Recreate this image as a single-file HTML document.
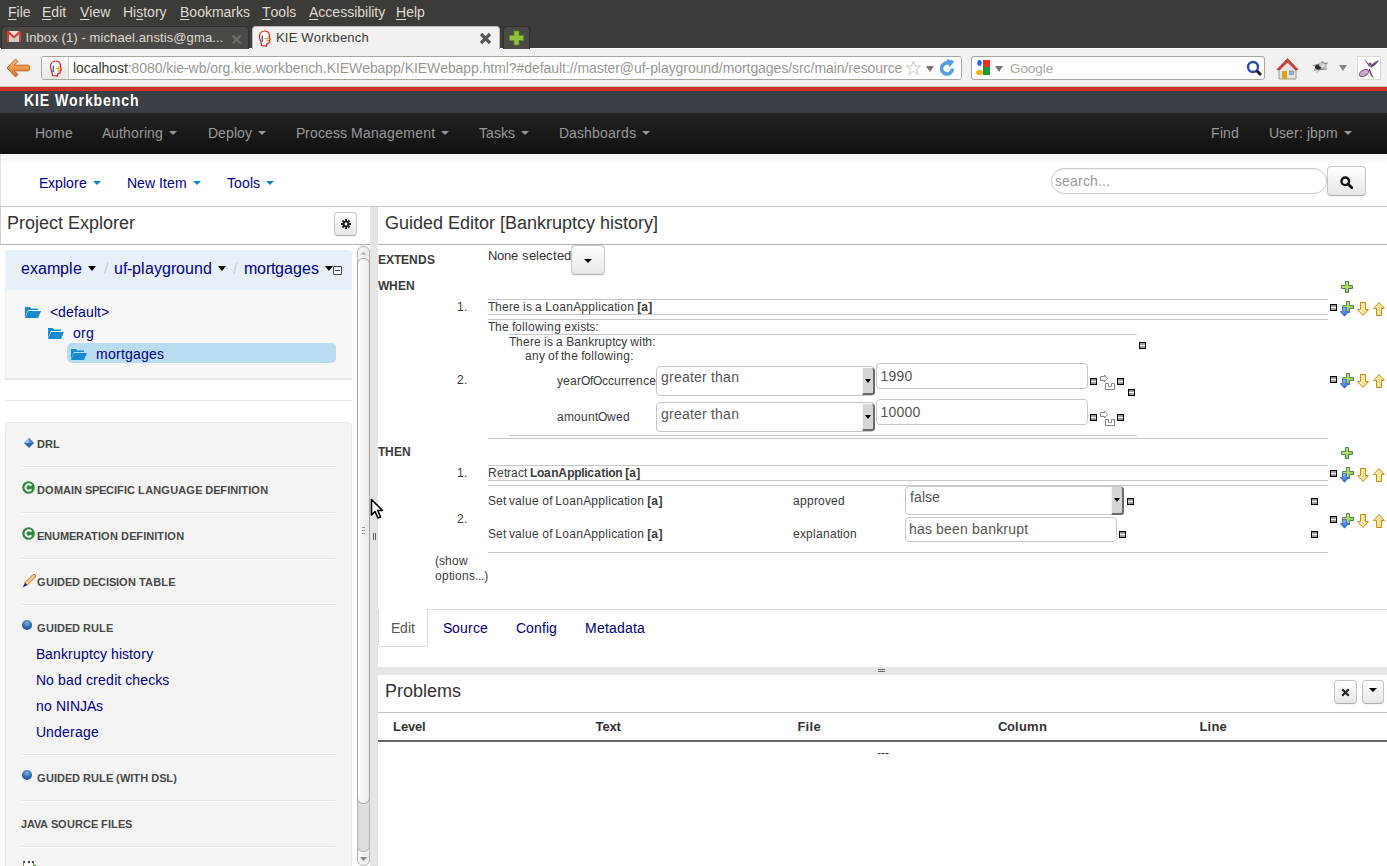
<!DOCTYPE html>
<html><head><meta charset="utf-8">
<style>
*{box-sizing:border-box;margin:0;padding:0}
html,body{width:1387px;height:866px;overflow:hidden;background:#fff;font-family:"Liberation Sans",sans-serif;position:relative;font-kerning:none}
.a{position:absolute;white-space:nowrap}
/* browser chrome */
#menubar{position:absolute;left:0;top:0;width:1387px;height:26px;background:#3c3b37}
#menubar>span{position:absolute;top:4px;font-size:14px;color:#dfdbd2;text-underline-offset:2px}
.tab{position:absolute;top:0px;height:23px;border:1px solid;border-bottom:none;border-radius:4px 4px 0 0}
#tabbar{position:absolute;left:0;top:26px;width:1387px;height:22px;background:#3c3b37}
#navbar0{position:absolute;left:0;top:49px;width:1387px;height:38px;background:#f2f1f0}
#red{position:absolute;left:0;top:87px;width:1387px;height:4px;background:#d0312d}
/* app */
#hdr{position:absolute;left:0;top:91px;width:1387px;height:22px;background:#3b3f46}
#nav{position:absolute;left:0;top:113px;width:1387px;height:41px;background:linear-gradient(#222,#111)}
#nav>span{position:absolute;top:12px;font-size:14px;color:#999}
.caret{display:inline-block;width:0;height:0;border-left:4px solid transparent;border-right:4px solid transparent;border-top:4px solid #999;vertical-align:middle;margin-left:6px;margin-top:-2px}
#tool{position:absolute;left:0;top:154px;width:1387px;height:53px;background:linear-gradient(#fff 0,#fff 1px,#f2f2f2 1px,#fff 11px);border-bottom:1px solid #c4c4c4;box-shadow:inset 1px 0 #e0e0e0}
#tool>span.l{position:absolute;top:21px;font-size:14px;color:#00008a}

.t{position:absolute;white-space:nowrap;line-height:1}
.lnk{color:#00008a}
.ahdr{position:absolute;font-size:11px;font-weight:bold;color:#484848;line-height:1;white-space:nowrap}
.sep{position:absolute;left:22px;width:313px;height:2px;border-top:1px solid #e2e2e2;background:#fff}
.re{position:absolute;font-size:12px;color:#3a3a3a;line-height:1;white-space:nowrap}
.hl{position:absolute;height:1px;background:#c8c8c8}
.mi{position:absolute;width:7px;height:7px;border:1px solid #000;background:linear-gradient(#999 0,#999 2px,#fff 2px,#fff 3px,#999 3px)}
.sel{position:absolute;border:1px solid #c6c6c6;border-radius:4px;background:#fff}
.selb{position:absolute;width:13px;background:#d6d6d6;border-left:1px solid #f2f2f2;border-right:2px solid #6a6a6a;border-bottom:2px solid #6a6a6a;border-radius:0 3px 3px 0}
.selb:after{content:"";position:absolute;left:2px;top:50%;margin-top:-2px;border-left:3px solid transparent;border-right:3px solid transparent;border-top:4px solid #000}
.inp{position:absolute;border:1px solid #c6c6c6;border-radius:4px;background:#fff}
.btn{position:absolute;border:1px solid #c4c4c4;border-bottom-color:#b0b0b0;border-radius:4px;background:linear-gradient(#fff,#e6e6e6);box-shadow:0 1px 2px rgba(0,0,0,.05)}
</style></head>
<body>
<svg width="0" height="0" style="position:absolute"><defs>
<linearGradient id="gpl" x1="0" y1="0" x2="1" y2="1"><stop offset="0" stop-color="#e8ec70"></stop><stop offset="1" stop-color="#8ac050"></stop></linearGradient>
<linearGradient id="gbl" x1="0" y1="0" x2="0" y2="1"><stop offset="0" stop-color="#8ab8f8"></stop><stop offset="1" stop-color="#2a60d0"></stop></linearGradient>
<linearGradient id="gyl" x1="0" y1="0" x2="1" y2="0"><stop offset="0" stop-color="#fff6d0"></stop><stop offset="1" stop-color="#f6d070"></stop></linearGradient>
</defs></svg>
<div id="menubar">
<span style="left:8px"><u>F</u>ile</span><span style="left:42px"><u>E</u>dit</span><span style="left:80px"><u>V</u>iew</span><span style="left:123px">Hi<u>s</u>tory</span><span style="left:180px"><u>B</u>ookmarks</span><span style="left:262px"><u>T</u>ools</span><span style="left:309px"><u>A</u>ccessibility</span><span style="left:396px"><u>H</u>elp</span>
</div>
<div id="tabbar">
 <div class="tab" style="left:1px;width:248px;background:#4a4945;border-color:#2e2d2a">
  <svg class="a" style="left:5px;top:4px" width="14" height="11" viewBox="0 0 14 11"><rect x="0" y="0" width="14" height="11" fill="#e8e6de"></rect><path d="M2 2L7 7L12 2V11H2Z" fill="#cfcdc4"></path><path d="M0 0H2L7 5L12 0H14V11H12V3L7 7.5L2 3V11H0Z" fill="#d83b30"></path></svg>
  <span class="a" style="left:23.5px;top:3px;font-size:13px;color:#dfdbd2;letter-spacing:0.1px">Inbox (1) - michael.anstis@gma...</span>
  <svg class="a" style="left:229px;top:7px" width="11" height="11" viewBox="0 0 11 11"><path d="M1.5 1.5L9.5 9.5M9.5 1.5L1.5 9.5" stroke="#6e6c67" stroke-width="2.4"></path></svg>
 </div>
 <div class="tab" style="left:252px;width:248px;background:#f2f1f0;border-color:#bdbab4;height:24px">
  <svg class="a" style="left:5px;top:3px" width="14" height="17" viewBox="0 0 14 17"><path d="M7 1C3.5 1 1.5 3.5 1.5 6.5C1.5 9 2.5 10.5 3 12L3.5 15.5L8.5 16L9 13.5L11 13L11.3 10.5L12.3 9.8L11.5 7.5C12 3.5 10 1 7 1Z" fill="#fff" stroke="#e8101a" stroke-width="1.2"></path><path d="M4.3 5.5V12" stroke="#1060d0" stroke-width="1.3"></path><path d="M6.5 8.5H9.5M8 11H9.8L10 6.5" stroke="#f0b000" stroke-width="1.2" fill="none"></path></svg>
  <span class="a" style="left:23px;top:3px;font-size:13px;color:#3c3b37;letter-spacing:0.2px">KIE Workbench</span>
  <svg class="a" style="left:226px;top:5px" width="13" height="13" viewBox="0 0 13 13"><path d="M2 2L11 11M11 2L2 11" stroke="#575552" stroke-width="3.2"></path></svg>
 </div>
 <div class="tab" style="left:503px;width:27px;background:#4a4945;border-color:#2e2d2a">
  <svg class="a" style="left:4px;top:3px" width="17" height="16" viewBox="0 0 17 16"><path d="M6 1H11V5.5H15.5V10.5H11V15H6V10.5H1.5V5.5H6Z" fill="#8fc33a" stroke="#5d8d1c" stroke-width="0.8"></path></svg>
 </div>
</div>
<div id="navbar0">
 <svg class="a" style="left:6px;top:9px" width="25" height="20" viewBox="0 0 25 20"><defs><linearGradient id="gar" x1="0" y1="0" x2="0" y2="1"><stop offset="0" stop-color="#f8c080"></stop><stop offset="1" stop-color="#e07020"></stop></linearGradient></defs><path d="M9.5 1L1 10L9.5 19L12 16.5L8 12.8H22.5C24 12.8 24 7.2 22.5 7.2H8L12 3.5Z" fill="url(#gar)" stroke="#c0601a" stroke-width="1" stroke-linejoin="round"></path></svg>
 <div class="a" style="left:41px;top:7px;width:921px;height:24px;border:1px solid #a9a59f;border-radius:3px;background:#fff;overflow:hidden">
  <div class="a" style="left:0;top:0;width:27px;height:22px;background:linear-gradient(#f9f9f8,#e9e8e6);border-right:1px solid #d6d3ce"></div>
  <svg class="a" style="left:7px;top:3px" width="14" height="17" viewBox="0 0 14 17"><path d="M7 1C3.5 1 1.5 3.5 1.5 6.5C1.5 9 2.5 10.5 3 12L3.5 15.5L8.5 16L9 13.5L11 13L11.3 10.5L12.3 9.8L11.5 7.5C12 3.5 10 1 7 1Z" fill="#fff" stroke="#e8101a" stroke-width="1.2"></path><path d="M4.3 5.5V12" stroke="#1060d0" stroke-width="1.3"></path><path d="M6.5 8.5H9.5M8 11H9.8L10 6.5" stroke="#f0b000" stroke-width="1.2" fill="none"></path></svg>
  <span class="a" style="left:31px;top:3px;font-size:14px;color:#999893;letter-spacing:-0.06px"><span style="color:#3c3b37">localhost</span>:8080/kie-wb/org.kie.workbench.KIEWebapp/KIEWebapp.html?#default://master@uf-playground/mortgages/src/main/resources</span>
  <div class="a" style="left:860px;top:0;width:60px;height:22px;background:#fff"></div>
  <svg class="a" style="left:863px;top:3px" width="17" height="16" viewBox="0 0 17 16"><path d="M8.5 1L10.6 6H15.8L11.6 9.2L13.2 14.5L8.5 11.4L3.8 14.5L5.4 9.2L1.2 6H6.4Z" fill="#fff" stroke="#c9c7c2" stroke-width="1"></path></svg>
  <svg class="a" style="left:884px;top:9px" width="8" height="6" viewBox="0 0 8 6"><path d="M0 0H8L4 6Z" fill="#77756f"></path></svg>
  <svg class="a" style="left:897px;top:2px" width="17" height="18" viewBox="0 0 17 18"><path d="M13.5 9.5A5.5 5.5 0 1 1 10 4.3" stroke="#5a9ee0" stroke-width="3.6" fill="none"></path><path d="M7.5 0L15.5 2L10.5 8.5Z" fill="#5a9ee0"></path></svg>
 </div>
 <div class="a" style="left:971px;top:7px;width:294px;height:24px;border:1px solid #a9a59f;border-radius:3px;background:#fff">
  <svg class="a" style="left:3px;top:3px" width="16" height="16" viewBox="0 0 16 16"><rect x="8" y="0" width="7" height="7" fill="#e32"></rect><rect x="8" y="7" width="7" height="8" fill="#1a9a3a"></rect><ellipse cx="4.5" cy="3" rx="2.2" ry="3" fill="#2a6ad8"></ellipse><ellipse cx="4.5" cy="12.5" rx="3.5" ry="2.5" fill="#f4b400"></ellipse></svg>
  <svg class="a" style="left:23px;top:9px" width="8" height="6" viewBox="0 0 8 6"><path d="M0 0H8L4 6Z" fill="#77756f"></path></svg>
  <span class="a" style="left:38px;top:3.5px;font-size:13.4px;color:#aaa49c">Google</span>
  <svg class="a" style="left:274px;top:3px" width="17" height="17" viewBox="0 0 17 17"><circle cx="7" cy="7" r="5" fill="#fff" stroke="#2c4fae" stroke-width="2.4"></circle><path d="M10.5 10.5L15 15" stroke="#222" stroke-width="3"></path></svg>
 </div>
 <svg class="a" style="left:1276px;top:8px" width="23" height="23" viewBox="0 0 23 23"><path d="M3 12L11.5 3L20 12V22H3Z" fill="#e6e4e0" stroke="#8a8884" stroke-width="0.8"></path><path d="M1 12.5L11.5 1.5L22 12.5L19.5 13L11.5 5L3.5 13Z" fill="#d23f3a" stroke="#a82a25" stroke-width="0.7"></path><rect x="6" y="14" width="5" height="8" fill="#e0a020"></rect><rect x="13.5" y="14" width="4" height="3.5" fill="#8fb8d8" stroke="#666" stroke-width="0.5"></rect></svg>
 <svg class="a" style="left:1312px;top:10px" width="17" height="15" viewBox="0 0 17 15"><ellipse cx="9.5" cy="7" rx="5.5" ry="4" fill="#b8b8b8" transform="rotate(-15 9.5 7)"></ellipse><ellipse cx="6" cy="8" rx="3" ry="2.6" fill="#2a2a2a"></ellipse><path d="M1 6.5L16 4M2 11L15 10M5 13.5L8 10M11 2L9 6" stroke="#666" stroke-width="0.8"></path><ellipse cx="10" cy="6" rx="3" ry="2" fill="#e8e8e8" opacity="0.7"></ellipse></svg>
 <svg class="a" style="left:1339px;top:16px" width="8" height="6" viewBox="0 0 8 6"><path d="M0 0H8L4 6Z" fill="#8a8884"></path></svg>
 <div class="a" style="left:1357px;top:7px;width:24px;height:24px;border:1px solid #dcd8d4;background:#fff"></div>
 <svg class="a" style="left:1358px;top:8px" width="22" height="22" viewBox="0 0 22 22"><ellipse cx="6" cy="16" rx="5" ry="3" fill="#c9a5c9" stroke="#6e4a77" stroke-width="1" transform="rotate(-30 6 16)"></ellipse><path d="M11 10C9 6 7 3 5 2C8 3 10 6 12 9Z" fill="#6e4a77"></path><path d="M12 9C15 6 18 4 21 3C19 7 16 9 13 11Z" fill="#6e4a77"></path><path d="M12 12C13 15 14 18 16 21C13 20 11 16 11 12Z" fill="#6e4a77"></path><circle cx="12" cy="7" r="1.5" fill="#6e4a77"></circle></svg>
 <div class="a" style="left:0;top:37px;width:1387px;height:1px;background:#c9c5bf"></div>
</div>
<div id="red"></div>
<div id="hdr"><span class="a nh" style="left:24px;top:1.7px;line-height:1;font-size:16px;font-weight:bold;color:#fff;letter-spacing:1px;transform:scaleX(0.88);transform-origin:0 0">KIE Workbench</span></div>
<div id="nav">
<span style="left:35px"><span style="letter-spacing: -0.109px;">H</span><span style="letter-spacing: 0.219px;">o</span><span style="letter-spacing: 0.344px;">m</span><span style="letter-spacing: 0.219px;">e</span></span>
<span style="left:102px"><span style="letter-spacing: -0.344px;">A</span><span style="letter-spacing: 0.219px;">u</span><span style="letter-spacing: 0.109px;">t</span><span style="letter-spacing: 0.219px;">h</span><span style="letter-spacing: 0.219px;">o</span><span style="letter-spacing: 0.344px;">r</span><span style="letter-spacing: -0.109px;">i</span><span style="letter-spacing: 0.219px;">n</span><span style="letter-spacing: 0.219px;">g</span><i class="caret"></i></span>
<span style="left:208px"><span style="letter-spacing: -0.109px;">D</span><span style="letter-spacing: 0.219px;">e</span><span style="letter-spacing: 0.219px;">p</span><span style="letter-spacing: -0.109px;">l</span><span style="letter-spacing: 0.219px;">o</span>y<i class="caret"></i></span>
<span style="left:296px"><span style="letter-spacing: -0.344px;">P</span><span style="letter-spacing: 0.344px;">r</span><span style="letter-spacing: 0.219px;">o</span>c<span style="letter-spacing: 0.219px;">e</span>ss<span style="letter-spacing: 0.109px;"> </span><span style="letter-spacing: 0.344px;">M</span><span style="letter-spacing: 0.219px;">a</span><span style="letter-spacing: 0.219px;">n</span><span style="letter-spacing: 0.219px;">a</span><span style="letter-spacing: 0.219px;">g</span><span style="letter-spacing: 0.219px;">e</span><span style="letter-spacing: 0.344px;">m</span><span style="letter-spacing: 0.219px;">e</span><span style="letter-spacing: 0.219px;">n</span><span style="letter-spacing: 0.109px;">t</span><i class="caret"></i></span>
<span style="left:479px"><span style="letter-spacing: -1.547px;">T</span><span style="letter-spacing: 0.219px;">a</span>sks<i class="caret"></i></span>
<span style="left:559px"><span style="letter-spacing: -0.109px;">D</span><span style="letter-spacing: 0.219px;">a</span>s<span style="letter-spacing: 0.219px;">h</span><span style="letter-spacing: 0.219px;">b</span><span style="letter-spacing: 0.219px;">o</span><span style="letter-spacing: 0.219px;">a</span><span style="letter-spacing: 0.344px;">r</span><span style="letter-spacing: 0.219px;">d</span>s<i class="caret"></i></span>
<span style="left:1211px"><span style="letter-spacing: 0.453px;">F</span><span style="letter-spacing: -0.109px;">i</span><span style="letter-spacing: 0.219px;">n</span><span style="letter-spacing: 0.219px;">d</span></span>
<span style="left:1269px"><span style="letter-spacing: -0.109px;">U</span>s<span style="letter-spacing: 0.219px;">e</span><span style="letter-spacing: 0.344px;">r</span><span style="letter-spacing: 0.109px;">:</span><span style="letter-spacing: 0.109px;"> </span><span style="letter-spacing: -0.109px;">j</span><span style="letter-spacing: 0.219px;">b</span><span style="letter-spacing: 0.219px;">p</span><span style="letter-spacing: 0.344px;">m</span><i class="caret"></i></span>
</div>
<div id="tool">
<span class="l" style="left:39px"><span style="letter-spacing: -0.344px;">E</span>x<span style="letter-spacing: 0.219px;">p</span><span style="letter-spacing: -0.109px;">l</span><span style="letter-spacing: 0.219px;">o</span><span style="letter-spacing: 0.344px;">r</span><span style="letter-spacing: 0.219px;">e</span><i class="caret" style="border-top-color:#08c"></i></span>
<span class="l" style="left:127px"><span style="letter-spacing: -0.109px;">N</span><span style="letter-spacing: 0.219px;">e</span><span style="letter-spacing: -0.109px;">w</span><span style="letter-spacing: 0.109px;"> </span><span style="letter-spacing: 0.109px;">I</span><span style="letter-spacing: 0.109px;">t</span><span style="letter-spacing: 0.219px;">e</span><span style="letter-spacing: 0.344px;">m</span><i class="caret" style="border-top-color:#08c"></i></span>
<div class="a" style="left:1051px;top:14px;width:276px;height:26px;border:1px solid #ccc;border-radius:13px;background:#fff;box-shadow:inset 0 1px 1px rgba(0,0,0,.075)"></div>
<span class="t" style="left:1055px;top:19.5px;font-size:14px;color:#999">s<span style="letter-spacing: 0.219px;">e</span><span style="letter-spacing: 0.219px;">a</span><span style="letter-spacing: 0.344px;">r</span>c<span style="letter-spacing: 0.219px;">h</span><span style="letter-spacing: 0.109px;">.</span><span style="letter-spacing: 0.109px;">.</span><span style="letter-spacing: 0.109px;">.</span></span>
<div class="btn" style="left:1327px;top:12px;width:39px;height:30px"></div>
<svg class="a" style="left:1340px;top:22px" width="13" height="13" viewBox="0 0 13 13"><circle cx="5.3" cy="5.3" r="3.8" fill="none" stroke="#111" stroke-width="2.4"></circle><path d="M8 8L11.8 11.8" stroke="#111" stroke-width="2.8" stroke-linecap="round"></path></svg>
<span class="l" style="left:227px"><span style="letter-spacing: -1.547px;">T</span><span style="letter-spacing: 0.219px;">o</span><span style="letter-spacing: 0.219px;">o</span><span style="letter-spacing: -0.109px;">l</span>s<i class="caret" style="border-top-color:#08c"></i></span>
</div>

<!-- LEFT PANEL -->
<div class="a" style="left:0;top:207px;width:370px;height:38px;border-left:1px solid #d0d0d0;border-bottom:1px solid #b4b4b4;background:#fff;box-shadow:0 1px 0 #f6f6f6"></div>
<span class="t" style="left:7px;top:213.5px;font-size:18px;color:#333">Pr<span style="letter-spacing: -0.016px;">o</span>j<span style="letter-spacing: -0.016px;">e</span>ct Ex<span style="letter-spacing: -0.016px;">p</span>l<span style="letter-spacing: -0.016px;">o</span>r<span style="letter-spacing: -0.016px;">e</span>r</span>
<div class="btn" style="left:334px;top:212px;width:23px;height:24px"></div>
<svg class="a" style="left:341px;top:219px" width="10" height="10" viewBox="0 0 10 10"><g fill="#222"><circle cx="5" cy="5" r="3.3"></circle><rect x="4" y="0" width="2" height="10"></rect><rect x="0" y="4" width="10" height="2"></rect><rect x="4" y="0" width="2" height="10" transform="rotate(45 5 5)"></rect><rect x="4" y="0" width="2" height="10" transform="rotate(-45 5 5)"></rect></g><circle cx="5" cy="5" r="1.4" fill="#fff"></circle></svg>
<div class="a" style="left:0;top:245px;width:355px;height:621px;background:#fff"></div>
<div class="a" style="left:5px;top:250px;width:347px;height:40px;background:#e6f0f6;border-radius:4px 4px 0 0"></div>
<span class="t lnk" style="left:21px;top:261px;font-size:16px"><span style="letter-spacing: 0.094px;">e</span>x<span style="letter-spacing: 0.094px;">a</span><span style="letter-spacing: -0.328px;">m</span><span style="letter-spacing: 0.094px;">p</span><span style="letter-spacing: 0.438px;">l</span><span style="letter-spacing: 0.094px;">e</span><i class="caret" style="border-top-color:#000;margin-left:6px;border-width:5px 4.5px 0"></i></span>
<span class="t" style="left:104px;top:261px;font-size:16px;color:#ccc"><span style="letter-spacing: -0.453px;">/</span></span>
<span class="t lnk" style="left:114px;top:261px;font-size:16px"><span style="letter-spacing: 0.094px;">u</span><span style="letter-spacing: -0.453px;">f</span><span style="letter-spacing: -0.328px;">-</span><span style="letter-spacing: 0.094px;">p</span><span style="letter-spacing: 0.438px;">l</span><span style="letter-spacing: 0.094px;">a</span>y<span style="letter-spacing: 0.094px;">g</span><span style="letter-spacing: -0.328px;">r</span><span style="letter-spacing: 0.094px;">o</span><span style="letter-spacing: 0.094px;">u</span><span style="letter-spacing: 0.094px;">n</span><span style="letter-spacing: 0.094px;">d</span><i class="caret" style="border-top-color:#000;margin-left:6px;border-width:5px 4.5px 0"></i></span>
<span class="t" style="left:233px;top:261px;font-size:16px;color:#ccc"><span style="letter-spacing: -0.453px;">/</span></span>
<span class="t lnk" style="left:244px;top:261px;font-size:16px"><span style="letter-spacing: -0.328px;">m</span><span style="letter-spacing: 0.094px;">o</span><span style="letter-spacing: -0.328px;">r</span><span style="letter-spacing: -0.453px;">t</span><span style="letter-spacing: 0.094px;">g</span><span style="letter-spacing: 0.094px;">a</span><span style="letter-spacing: 0.094px;">g</span><span style="letter-spacing: 0.094px;">e</span>s<i class="caret" style="border-top-color:#000;margin-left:6px;border-width:5px 4.5px 0"></i></span>
<div class="a" style="left:333px;top:266px;width:9px;height:9px;border:1px solid #444;border-radius:1px;background:#f4f4f4"><div class="a" style="left:1px;top:3px;width:5px;height:1px;background:#444"></div></div>
<div class="a" style="left:5px;top:290px;width:347px;height:90px;background:#f7f7f7;border-left:1px solid #ececec;border-bottom:2px solid #e8e8e8"></div>
<div class="a" style="left:67px;top:343px;width:269px;height:20px;background:#b8dcf0;border-radius:5px"></div>
<svg class="a" style="left:25px;top:307px" width="16" height="11" viewBox="0 0 16 11"><path d="M0 0H5L6 1.5H13V3H3L0 10Z" fill="#1a8ad0"></path><path d="M3 4H16L13 11H0Z" fill="#1a8ad0"></path></svg>
<span class="t lnk" style="left:50px;top:304.6px;font-size:14px"><span style="letter-spacing: -0.172px;">&lt;</span><span style="letter-spacing: 0.219px;">d</span><span style="letter-spacing: 0.219px;">e</span><span style="letter-spacing: 0.109px;">f</span><span style="letter-spacing: 0.219px;">a</span><span style="letter-spacing: 0.219px;">u</span><span style="letter-spacing: -0.109px;">l</span><span style="letter-spacing: 0.109px;">t</span><span style="letter-spacing: -0.172px;">&gt;</span></span>
<svg class="a" style="left:48px;top:328px" width="16" height="11" viewBox="0 0 16 11"><path d="M0 0H5L6 1.5H13V3H3L0 10Z" fill="#1a8ad0"></path><path d="M3 4H16L13 11H0Z" fill="#1a8ad0"></path></svg>
<span class="t lnk" style="left:73px;top:325.8px;font-size:14px"><span style="letter-spacing: 0.219px;">o</span><span style="letter-spacing: 0.344px;">r</span><span style="letter-spacing: 0.219px;">g</span></span>
<svg class="a" style="left:71px;top:349px" width="16" height="11" viewBox="0 0 16 11"><path d="M0 0H5L6 1.5H13V3H3L0 10Z" fill="#1a8ad0"></path><path d="M3 4H16L13 11H0Z" fill="#1a8ad0"></path></svg>
<span class="t lnk" style="left:96px;top:346.8px;font-size:14px"><span style="letter-spacing: 0.344px;">m</span><span style="letter-spacing: 0.219px;">o</span><span style="letter-spacing: 0.344px;">r</span><span style="letter-spacing: 0.109px;">t</span><span style="letter-spacing: 0.219px;">g</span><span style="letter-spacing: 0.219px;">a</span><span style="letter-spacing: 0.219px;">g</span><span style="letter-spacing: 0.219px;">e</span>s</span>
<div class="a" style="left:5px;top:400px;width:347px;height:1px;background:#e8e8e8"></div>
<div class="a" style="left:5px;top:422px;width:347px;height:450px;background:#f4f4f4;border:1px solid #e8e8e8;border-radius:4px"></div>
<svg class="a" style="left:24px;top:438px" width="10" height="10" viewBox="0 0 10 10"><path d="M5 0L10 5L5 10L0 5Z" fill="#2a68b0"></path><path d="M5 0L5 5H0Z" fill="#9cc0e8"></path><path d="M5 0L10 5H5Z" fill="#4a88c8"></path></svg>
<span class="ahdr" style="left:37px;top:438.7px"><span style="letter-spacing: 0.063px;">D</span><span style="letter-spacing: 0.063px;">R</span><span style="letter-spacing: 0.281px;">L</span></span>
<div class="sep" style="top:466px"></div>
<svg class="a" style="left:22px;top:481px" width="13" height="13" viewBox="0 0 13 13"><circle cx="6.5" cy="6.5" r="6.3" fill="#2e8b3e"></circle><path d="M9.3 4.6A3.2 3.2 0 1 0 9.3 8.4" stroke="#fff" stroke-width="2" fill="none"></path></svg>
<span class="ahdr" style="left:37px;top:485.3px"><span style="letter-spacing: 0.063px;">D</span><span style="letter-spacing: 0.438px;">O</span><span style="letter-spacing: -0.156px;">M</span><span style="letter-spacing: 0.063px;">A</span><span style="letter-spacing: -0.063px;">I</span><span style="letter-spacing: 0.063px;">N</span><span style="letter-spacing: -0.063px;"> </span><span style="letter-spacing: -0.344px;">S</span><span style="letter-spacing: -0.344px;">P</span><span style="letter-spacing: -0.344px;">E</span><span style="letter-spacing: 0.063px;">C</span><span style="letter-spacing: -0.063px;">I</span><span style="letter-spacing: 0.281px;">F</span><span style="letter-spacing: -0.063px;">I</span><span style="letter-spacing: 0.063px;">C</span><span style="letter-spacing: -0.063px;"> </span><span style="letter-spacing: 0.281px;">L</span><span style="letter-spacing: 0.063px;">A</span><span style="letter-spacing: 0.063px;">N</span><span style="letter-spacing: 0.438px;">G</span><span style="letter-spacing: 0.063px;">U</span><span style="letter-spacing: 0.063px;">A</span><span style="letter-spacing: 0.438px;">G</span><span style="letter-spacing: -0.344px;">E</span><span style="letter-spacing: -0.063px;"> </span><span style="letter-spacing: 0.063px;">D</span><span style="letter-spacing: -0.344px;">E</span><span style="letter-spacing: 0.281px;">F</span><span style="letter-spacing: -0.063px;">I</span><span style="letter-spacing: 0.063px;">N</span><span style="letter-spacing: -0.063px;">I</span><span style="letter-spacing: 0.281px;">T</span><span style="letter-spacing: -0.063px;">I</span><span style="letter-spacing: 0.438px;">O</span><span style="letter-spacing: 0.063px;">N</span></span>
<div class="sep" style="top:512px"></div>
<svg class="a" style="left:22px;top:527px" width="13" height="13" viewBox="0 0 13 13"><circle cx="6.5" cy="6.5" r="6.3" fill="#2e8b3e"></circle><path d="M9.3 4.6A3.2 3.2 0 1 0 9.3 8.4" stroke="#fff" stroke-width="2" fill="none"></path></svg>
<span class="ahdr" style="left:37px;top:531.3px"><span style="letter-spacing: -0.344px;">E</span><span style="letter-spacing: 0.063px;">N</span><span style="letter-spacing: 0.063px;">U</span><span style="letter-spacing: -0.156px;">M</span><span style="letter-spacing: -0.344px;">E</span><span style="letter-spacing: 0.063px;">R</span><span style="letter-spacing: -0.938px;">A</span><span style="letter-spacing: 0.281px;">T</span><span style="letter-spacing: -0.063px;">I</span><span style="letter-spacing: 0.438px;">O</span><span style="letter-spacing: 0.063px;">N</span><span style="letter-spacing: -0.063px;"> </span><span style="letter-spacing: 0.063px;">D</span><span style="letter-spacing: -0.344px;">E</span><span style="letter-spacing: 0.281px;">F</span><span style="letter-spacing: -0.063px;">I</span><span style="letter-spacing: 0.063px;">N</span><span style="letter-spacing: -0.063px;">I</span><span style="letter-spacing: 0.281px;">T</span><span style="letter-spacing: -0.063px;">I</span><span style="letter-spacing: 0.438px;">O</span><span style="letter-spacing: 0.063px;">N</span></span>
<div class="sep" style="top:558px"></div>
<svg class="a" style="left:22px;top:573px" width="15" height="15" viewBox="0 0 15 15"><path d="M2.8 9.8L10.8 1.8Q12.2 0.8 13.3 1.9Q14.2 3 13.2 4.2L5.2 12.2Z" fill="#f9c98a" stroke="#b8661e" stroke-width="0.9"></path><path d="M2.8 9.8L5.2 12.2L0.8 14.2Z" fill="#1a2a70"></path></svg>
<span class="ahdr" style="left:37px;top:577.3px"><span style="letter-spacing: 0.438px;">G</span><span style="letter-spacing: 0.063px;">U</span><span style="letter-spacing: -0.063px;">I</span><span style="letter-spacing: 0.063px;">D</span><span style="letter-spacing: -0.344px;">E</span><span style="letter-spacing: 0.063px;">D</span><span style="letter-spacing: -0.063px;"> </span><span style="letter-spacing: 0.063px;">D</span><span style="letter-spacing: -0.344px;">E</span><span style="letter-spacing: 0.063px;">C</span><span style="letter-spacing: -0.063px;">I</span><span style="letter-spacing: -0.344px;">S</span><span style="letter-spacing: -0.063px;">I</span><span style="letter-spacing: 0.438px;">O</span><span style="letter-spacing: 0.063px;">N</span><span style="letter-spacing: -0.063px;"> </span><span style="letter-spacing: -0.719px;">T</span><span style="letter-spacing: 0.063px;">A</span><span style="letter-spacing: 0.063px;">B</span><span style="letter-spacing: 0.281px;">L</span><span style="letter-spacing: -0.344px;">E</span></span>
<div class="sep" style="top:604px"></div>
<svg class="a" style="left:22px;top:620px" width="10" height="10" viewBox="0 0 10 10"><defs><radialGradient id="gb620" cx="0.5" cy="0.3" r="0.7"><stop offset="0" stop-color="#8ab4e0"></stop><stop offset="0.5" stop-color="#3a78b8"></stop><stop offset="1" stop-color="#1a5090"></stop></radialGradient></defs><circle cx="5" cy="5" r="5" fill="url(#gb620)"></circle></svg>
<span class="ahdr" style="left:37px;top:623.3px"><span style="letter-spacing: 0.438px;">G</span><span style="letter-spacing: 0.063px;">U</span><span style="letter-spacing: -0.063px;">I</span><span style="letter-spacing: 0.063px;">D</span><span style="letter-spacing: -0.344px;">E</span><span style="letter-spacing: 0.063px;">D</span><span style="letter-spacing: -0.063px;"> </span><span style="letter-spacing: 0.063px;">R</span><span style="letter-spacing: 0.063px;">U</span><span style="letter-spacing: 0.281px;">L</span><span style="letter-spacing: -0.344px;">E</span></span>
<span class="t lnk" style="left:36px;top:647px;font-size:14px"><span style="letter-spacing: -0.344px;">B</span><span style="letter-spacing: 0.219px;">a</span><span style="letter-spacing: 0.219px;">n</span>k<span style="letter-spacing: 0.344px;">r</span><span style="letter-spacing: 0.219px;">u</span><span style="letter-spacing: 0.219px;">p</span><span style="letter-spacing: 0.109px;">t</span>cy<span style="letter-spacing: 0.109px;"> </span><span style="letter-spacing: 0.219px;">h</span><span style="letter-spacing: -0.109px;">i</span>s<span style="letter-spacing: 0.109px;">t</span><span style="letter-spacing: 0.219px;">o</span><span style="letter-spacing: 0.344px;">r</span>y</span>
<span class="t lnk" style="left:36px;top:673px;font-size:14px"><span style="letter-spacing: -0.109px;">N</span><span style="letter-spacing: 0.219px;">o</span><span style="letter-spacing: 0.109px;"> </span><span style="letter-spacing: 0.219px;">b</span><span style="letter-spacing: 0.219px;">a</span><span style="letter-spacing: 0.219px;">d</span><span style="letter-spacing: 0.109px;"> </span>c<span style="letter-spacing: 0.344px;">r</span><span style="letter-spacing: 0.219px;">e</span><span style="letter-spacing: 0.219px;">d</span><span style="letter-spacing: -0.109px;">i</span><span style="letter-spacing: 0.109px;">t</span><span style="letter-spacing: 0.109px;"> </span>c<span style="letter-spacing: 0.219px;">h</span><span style="letter-spacing: 0.219px;">e</span>cks</span>
<span class="t lnk" style="left:36px;top:699px;font-size:14px"><span style="letter-spacing: 0.219px;">n</span><span style="letter-spacing: 0.219px;">o</span><span style="letter-spacing: 0.109px;"> </span><span style="letter-spacing: -0.109px;">N</span><span style="letter-spacing: 0.109px;">I</span><span style="letter-spacing: -0.109px;">N</span>J<span style="letter-spacing: -0.344px;">A</span>s</span>
<span class="t lnk" style="left:36px;top:725px;font-size:14px"><span style="letter-spacing: -0.109px;">U</span><span style="letter-spacing: 0.219px;">n</span><span style="letter-spacing: 0.219px;">d</span><span style="letter-spacing: 0.219px;">e</span><span style="letter-spacing: 0.344px;">r</span><span style="letter-spacing: 0.219px;">a</span><span style="letter-spacing: 0.219px;">g</span><span style="letter-spacing: 0.219px;">e</span></span>
<div class="sep" style="top:754px"></div>
<svg class="a" style="left:22px;top:770px" width="10" height="10" viewBox="0 0 10 10"><defs><radialGradient id="gb770" cx="0.5" cy="0.3" r="0.7"><stop offset="0" stop-color="#8ab4e0"></stop><stop offset="0.5" stop-color="#3a78b8"></stop><stop offset="1" stop-color="#1a5090"></stop></radialGradient></defs><circle cx="5" cy="5" r="5" fill="url(#gb770)"></circle></svg>
<span class="ahdr" style="left:37px;top:772.7px"><span style="letter-spacing: 0.438px;">G</span><span style="letter-spacing: 0.063px;">U</span><span style="letter-spacing: -0.063px;">I</span><span style="letter-spacing: 0.063px;">D</span><span style="letter-spacing: -0.344px;">E</span><span style="letter-spacing: 0.063px;">D</span><span style="letter-spacing: -0.063px;"> </span><span style="letter-spacing: 0.063px;">R</span><span style="letter-spacing: 0.063px;">U</span><span style="letter-spacing: 0.281px;">L</span><span style="letter-spacing: -0.344px;">E</span><span style="letter-spacing: -0.063px;"> </span><span style="letter-spacing: 0.344px;">(</span><span style="letter-spacing: -0.375px;">W</span><span style="letter-spacing: -0.063px;">I</span><span style="letter-spacing: 0.281px;">T</span><span style="letter-spacing: 0.063px;">H</span><span style="letter-spacing: -0.063px;"> </span><span style="letter-spacing: 0.063px;">D</span><span style="letter-spacing: -0.344px;">S</span><span style="letter-spacing: 0.281px;">L</span><span style="letter-spacing: 0.344px;">)</span></span>
<div class="sep" style="top:800px"></div>
<span class="ahdr" style="left:21px;top:818.5px"><span style="letter-spacing: -0.125px;">J</span><span style="letter-spacing: -0.938px;">A</span><span style="letter-spacing: -1.344px;">V</span><span style="letter-spacing: 0.063px;">A</span><span style="letter-spacing: -0.063px;"> </span><span style="letter-spacing: -0.344px;">S</span><span style="letter-spacing: 0.438px;">O</span><span style="letter-spacing: 0.063px;">U</span><span style="letter-spacing: 0.063px;">R</span><span style="letter-spacing: 0.063px;">C</span><span style="letter-spacing: -0.344px;">E</span><span style="letter-spacing: -0.063px;"> </span><span style="letter-spacing: 0.281px;">F</span><span style="letter-spacing: -0.063px;">I</span><span style="letter-spacing: 0.281px;">L</span><span style="letter-spacing: -0.344px;">E</span><span style="letter-spacing: -0.344px;">S</span></span>
<div class="sep" style="top:846px"></div>
<div class="a" style="left:23px;top:861px;width:11px;height:6px;border-left:1px solid #b8862b;border-right:1px solid #b8862b;border-top:2px dotted #2a4a8a;background:#fff"></div><div class="a" style="left:34px;top:865px;width:2px;height:1px;background:#2a8a3a"></div>
<!-- scrollbar -->
<div class="a" style="left:357px;top:246px;width:13px;height:620px;border:1px solid #b8b4ae;border-radius:6px;background:linear-gradient(90deg,#f6f6f5,#ecebea)"></div>
<svg class="a" style="left:359px;top:250px" width="9" height="6" viewBox="0 0 9 6"><path d="M1.5 4.5H7.5L4.5 1.5Z" fill="#b4b4b4"></path></svg>
<div class="a" style="left:357px;top:780px;width:13px;height:72px;border:1px solid #b8b4ae;border-radius:0 0 6px 6px;background:#dedcda"></div>
<div class="a" style="left:357px;top:258px;width:13px;height:546px;border:1px solid #a8a4a0;border-radius:6px;background:linear-gradient(90deg,#fbfbfb,#e9e9e8)"></div>
<svg class="a" style="left:359px;top:856px" width="9" height="6" viewBox="0 0 9 6"><path d="M1 1H8L4.5 5Z" fill="#888"></path></svg>
<!-- splitter -->
<div class="a" style="left:370px;top:207px;width:8px;height:659px;background:#e5e5e5"></div>
<div class="a" style="left:373px;top:533px;width:1px;height:7px;background:#666"></div>
<div class="a" style="left:375px;top:533px;width:1px;height:7px;background:#666"></div>

<!-- RIGHT PANEL -->
<div class="a" style="left:378px;top:244px;width:1009px;height:1px;background:#b4b4b4"></div>
<span class="t" style="left:385px;top:213.7px;font-size:18px;color:#333">G<span style="letter-spacing: -0.016px;">u</span>i<span style="letter-spacing: -0.016px;">d</span><span style="letter-spacing: -0.016px;">e</span><span style="letter-spacing: -0.016px;">d</span> E<span style="letter-spacing: -0.016px;">d</span>it<span style="letter-spacing: -0.016px;">o</span>r [B<span style="letter-spacing: -0.016px;">a</span><span style="letter-spacing: -0.016px;">n</span>kr<span style="letter-spacing: -0.016px;">u</span><span style="letter-spacing: -0.016px;">p</span>tcy <span style="letter-spacing: -0.016px;">h</span>ist<span style="letter-spacing: -0.016px;">o</span>ry]</span>
<span class="re" style="left:378px;top:253.8px;font-weight:bold">EX<span style="letter-spacing: -0.328px;">T</span>E<span style="letter-spacing: 0.328px;">N</span><span style="letter-spacing: 0.328px;">D</span>S</span>
<span class="re" style="left:378px;top:279.8px;font-weight:bold"><span style="letter-spacing: -0.328px;">W</span><span style="letter-spacing: 0.328px;">H</span>E<span style="letter-spacing: 0.328px;">N</span></span>
<span class="t" style="left:488px;top:249px;font-size:13px;color:#333"><span style="letter-spacing: -0.391px;">N</span><span style="letter-spacing: -0.234px;">o</span><span style="letter-spacing: -0.234px;">n</span><span style="letter-spacing: -0.234px;">e</span><span style="letter-spacing: 0.391px;"> </span><span style="letter-spacing: 0.5px;">s</span><span style="letter-spacing: -0.234px;">e</span><span style="letter-spacing: 0.109px;">l</span><span style="letter-spacing: -0.234px;">e</span><span style="letter-spacing: 0.5px;">c</span><span style="letter-spacing: 0.391px;">t</span><span style="letter-spacing: -0.234px;">e</span><span style="letter-spacing: -0.234px;">d</span></span>
<div class="btn" style="left:571px;top:245px;width:34px;height:30px"></div>
<i class="a" style="left:584px;top:259px;border-left:4px solid transparent;border-right:4px solid transparent;border-top:4px solid #000"></i>
<svg class="a" style="left:1341px;top:281px" width="12" height="12" viewBox="0 0 12 12"><path d="M4.5 0.5H7.5V4.5H11.5V7.5H7.5V11.5H4.5V7.5H0.5V4.5H4.5Z" fill="url(#gpl)" stroke="#3f8a55" stroke-width="1"></path></svg>
<span class="re" style="left:457px;top:301.4px"><span style="letter-spacing: 0.328px;">1</span><span style="letter-spacing: -0.328px;">.</span></span>
<div class="hl" style="left:488px;top:299px;width:840px"></div>
<span class="re" style="left:488px;top:300.8px"><span style="letter-spacing: -0.328px;">T</span><span style="letter-spacing: 0.328px;">h</span><span style="letter-spacing: 0.328px;">e</span>r<span style="letter-spacing: 0.328px;">e</span><span style="letter-spacing: -0.328px;"> </span><span style="letter-spacing: 0.328px;">i</span>s<span style="letter-spacing: -0.328px;"> </span><span style="letter-spacing: 0.328px;">a</span><span style="letter-spacing: -0.328px;"> </span><span style="letter-spacing: 0.328px;">L</span><span style="letter-spacing: 0.328px;">o</span><span style="letter-spacing: 0.328px;">a</span><span style="letter-spacing: 0.328px;">n</span>A<span style="letter-spacing: 0.328px;">p</span><span style="letter-spacing: 0.328px;">p</span><span style="letter-spacing: 0.328px;">l</span><span style="letter-spacing: 0.328px;">i</span>c<span style="letter-spacing: 0.328px;">a</span><span style="letter-spacing: -0.328px;">t</span><span style="letter-spacing: 0.328px;">i</span><span style="letter-spacing: 0.328px;">o</span><span style="letter-spacing: 0.328px;">n</span><span style="letter-spacing: -0.328px;"> </span><b>[<span style="letter-spacing: 0.328px;">a</span>]</b></span>
<div class="hl" style="left:488px;top:314px;width:840px"></div>
<div class="mi" style="left:1330px;top:304px"></div><svg class="a" style="left:1340px;top:301px" width="15" height="16" viewBox="0 0 15 16"><path d="M6.5 0.5H9.5V4.5H13.5V7.5H9.5V11.5H6.5V7.5H2.5V4.5H6.5Z" fill="url(#gpl)" stroke="#3f8a55" stroke-width="1"></path><path d="M2.5 6.5H6.5V10.5H8.8L4.5 15.2L0.2 10.5H2.5Z" fill="url(#gbl)" stroke="#2a58c0" stroke-width="0.7"></path></svg><svg class="a" style="left:1357px;top:302px" width="12" height="14" viewBox="0 0 12 14"><path d="M3.5 0.5H8.5V7.5H11.5L6 13.5L0.5 7.5H3.5Z" fill="url(#gyl)" stroke="#c88a14" stroke-width="1" stroke-linejoin="round"></path></svg><svg class="a" style="left:1373px;top:302px" width="12" height="14" viewBox="0 0 12 14"><path d="M3.5 13.5H8.5V6.5H11.5L6 0.5L0.5 6.5H3.5Z" fill="url(#gyl)" stroke="#c88a14" stroke-width="1" stroke-linejoin="round"></path></svg>
<div class="hl" style="left:488px;top:319px;width:840px"></div>
<span class="re" style="left:488px;top:321.1px"><span style="letter-spacing: -0.328px;">T</span><span style="letter-spacing: 0.328px;">h</span><span style="letter-spacing: 0.328px;">e</span><span style="letter-spacing: -0.328px;"> </span><span style="letter-spacing: -0.328px;">f</span><span style="letter-spacing: 0.328px;">o</span><span style="letter-spacing: 0.328px;">l</span><span style="letter-spacing: 0.328px;">l</span><span style="letter-spacing: 0.328px;">o</span><span style="letter-spacing: 0.328px;">w</span><span style="letter-spacing: 0.328px;">i</span><span style="letter-spacing: 0.328px;">n</span><span style="letter-spacing: 0.328px;">g</span><span style="letter-spacing: -0.328px;"> </span><span style="letter-spacing: 0.328px;">e</span>x<span style="letter-spacing: 0.328px;">i</span>s<span style="letter-spacing: -0.328px;">t</span>s<span style="letter-spacing: -0.328px;">:</span></span>
<div class="hl" style="left:509px;top:334px;width:628px"></div>
<span class="re" style="left:509px;top:335.7px"><span style="letter-spacing: -0.328px;">T</span><span style="letter-spacing: 0.328px;">h</span><span style="letter-spacing: 0.328px;">e</span>r<span style="letter-spacing: 0.328px;">e</span><span style="letter-spacing: -0.328px;"> </span><span style="letter-spacing: 0.328px;">i</span>s<span style="letter-spacing: -0.328px;"> </span><span style="letter-spacing: 0.328px;">a</span><span style="letter-spacing: -0.328px;"> </span>B<span style="letter-spacing: 0.328px;">a</span><span style="letter-spacing: 0.328px;">n</span>kr<span style="letter-spacing: 0.328px;">u</span><span style="letter-spacing: 0.328px;">p</span><span style="letter-spacing: -0.328px;">t</span>cy<span style="letter-spacing: -0.328px;"> </span><span style="letter-spacing: 0.328px;">w</span><span style="letter-spacing: 0.328px;">i</span><span style="letter-spacing: -0.328px;">t</span><span style="letter-spacing: 0.328px;">h</span><span style="letter-spacing: -0.328px;">:</span></span>
<div class="mi" style="left:1139px;top:342px"></div>
<span class="re" style="left:525px;top:350.2px"><span style="letter-spacing: 0.328px;">a</span><span style="letter-spacing: 0.328px;">n</span>y<span style="letter-spacing: -0.328px;"> </span><span style="letter-spacing: 0.328px;">o</span><span style="letter-spacing: -0.328px;">f</span><span style="letter-spacing: -0.328px;"> </span><span style="letter-spacing: -0.328px;">t</span><span style="letter-spacing: 0.328px;">h</span><span style="letter-spacing: 0.328px;">e</span><span style="letter-spacing: -0.328px;"> </span><span style="letter-spacing: -0.328px;">f</span><span style="letter-spacing: 0.328px;">o</span><span style="letter-spacing: 0.328px;">l</span><span style="letter-spacing: 0.328px;">l</span><span style="letter-spacing: 0.328px;">o</span><span style="letter-spacing: 0.328px;">w</span><span style="letter-spacing: 0.328px;">i</span><span style="letter-spacing: 0.328px;">n</span><span style="letter-spacing: 0.328px;">g</span><span style="letter-spacing: -0.328px;">:</span></span>
<span class="re" style="left:457px;top:373.5px"><span style="letter-spacing: 0.328px;">2</span><span style="letter-spacing: -0.328px;">.</span></span>
<div class="mi" style="left:1330px;top:376px"></div><svg class="a" style="left:1340px;top:373px" width="15" height="16" viewBox="0 0 15 16"><path d="M6.5 0.5H9.5V4.5H13.5V7.5H9.5V11.5H6.5V7.5H2.5V4.5H6.5Z" fill="url(#gpl)" stroke="#3f8a55" stroke-width="1"></path><path d="M2.5 6.5H6.5V10.5H8.8L4.5 15.2L0.2 10.5H2.5Z" fill="url(#gbl)" stroke="#2a58c0" stroke-width="0.7"></path></svg><svg class="a" style="left:1357px;top:374px" width="12" height="14" viewBox="0 0 12 14"><path d="M3.5 0.5H8.5V7.5H11.5L6 13.5L0.5 7.5H3.5Z" fill="url(#gyl)" stroke="#c88a14" stroke-width="1" stroke-linejoin="round"></path></svg><svg class="a" style="left:1373px;top:374px" width="12" height="14" viewBox="0 0 12 14"><path d="M3.5 13.5H8.5V6.5H11.5L6 0.5L0.5 6.5H3.5Z" fill="url(#gyl)" stroke="#c88a14" stroke-width="1" stroke-linejoin="round"></path></svg>
<span class="re" style="left:557px;top:374.5px">y<span style="letter-spacing: 0.328px;">e</span><span style="letter-spacing: 0.328px;">a</span>r<span style="letter-spacing: -0.328px;">O</span><span style="letter-spacing: -0.328px;">f</span><span style="letter-spacing: -0.328px;">O</span>cc<span style="letter-spacing: 0.328px;">u</span>rr<span style="letter-spacing: 0.328px;">e</span><span style="letter-spacing: 0.328px;">n</span>c<span style="letter-spacing: 0.328px;">e</span></span>
<div class="sel" style="left:656px;top:366px;width:219px;height:30px"></div>
<div class="selb" style="left:862px;top:368px;height:27px"></div>
<span class="t" style="left:661px;top:370.1px;font-size:14px;color:#555"><span style="letter-spacing: 0.219px;">g</span><span style="letter-spacing: 0.344px;">r</span><span style="letter-spacing: 0.219px;">e</span><span style="letter-spacing: 0.219px;">a</span><span style="letter-spacing: 0.109px;">t</span><span style="letter-spacing: 0.219px;">e</span><span style="letter-spacing: 0.344px;">r</span><span style="letter-spacing: 0.109px;"> </span><span style="letter-spacing: 0.109px;">t</span><span style="letter-spacing: 0.219px;">h</span><span style="letter-spacing: 0.219px;">a</span><span style="letter-spacing: 0.219px;">n</span></span>
<div class="inp" style="left:876px;top:363px;width:212px;height:26px"></div>
<span class="t" style="left:880.5px;top:368.6px;font-size:14px;color:#555"><span style="letter-spacing: 0.219px;">1</span><span style="letter-spacing: 0.219px;">9</span><span style="letter-spacing: 0.219px;">9</span><span style="letter-spacing: 0.219px;">0</span></span>
<div class="mi" style="left:1090px;top:378px"></div><svg class="a" style="left:1100px;top:375px" width="16" height="15" viewBox="0 0 16 15"><path d="M0.5 1.5H4.5V0L7.5 3.5L4.5 7V5.5H0.5Z" fill="#fff" stroke="#888" stroke-width="1"></path><path d="M5.5 8.5H8.5V11.5H11.5V8.5H14.5V14.5H5.5Z" fill="none" stroke="#888" stroke-width="1"></path></svg><div class="mi" style="left:1117px;top:378px"></div><div class="mi" style="left:1128px;top:389px"></div>
<span class="re" style="left:557px;top:411.4px"><span style="letter-spacing: 0.328px;">a</span>m<span style="letter-spacing: 0.328px;">o</span><span style="letter-spacing: 0.328px;">u</span><span style="letter-spacing: 0.328px;">n</span><span style="letter-spacing: -0.328px;">t</span><span style="letter-spacing: -0.328px;">O</span><span style="letter-spacing: 0.328px;">w</span><span style="letter-spacing: 0.328px;">e</span><span style="letter-spacing: 0.328px;">d</span></span>
<div class="sel" style="left:656px;top:402px;width:219px;height:30px"></div>
<div class="selb" style="left:862px;top:404px;height:27px"></div>
<span class="t" style="left:661px;top:406.5px;font-size:14px;color:#555"><span style="letter-spacing: 0.219px;">g</span><span style="letter-spacing: 0.344px;">r</span><span style="letter-spacing: 0.219px;">e</span><span style="letter-spacing: 0.219px;">a</span><span style="letter-spacing: 0.109px;">t</span><span style="letter-spacing: 0.219px;">e</span><span style="letter-spacing: 0.344px;">r</span><span style="letter-spacing: 0.109px;"> </span><span style="letter-spacing: 0.109px;">t</span><span style="letter-spacing: 0.219px;">h</span><span style="letter-spacing: 0.219px;">a</span><span style="letter-spacing: 0.219px;">n</span></span>
<div class="inp" style="left:876px;top:399px;width:212px;height:26px"></div>
<span class="t" style="left:880.5px;top:404.8px;font-size:14px;color:#555"><span style="letter-spacing: 0.219px;">1</span><span style="letter-spacing: 0.219px;">0</span><span style="letter-spacing: 0.219px;">0</span><span style="letter-spacing: 0.219px;">0</span><span style="letter-spacing: 0.219px;">0</span></span>
<div class="mi" style="left:1090px;top:414px"></div><svg class="a" style="left:1100px;top:411px" width="16" height="15" viewBox="0 0 16 15"><path d="M0.5 1.5H4.5V0L7.5 3.5L4.5 7V5.5H0.5Z" fill="#fff" stroke="#888" stroke-width="1"></path><path d="M5.5 8.5H8.5V11.5H11.5V8.5H14.5V14.5H5.5Z" fill="none" stroke="#888" stroke-width="1"></path></svg><div class="mi" style="left:1117px;top:414px"></div>
<div class="hl" style="left:509px;top:435px;width:628px"></div>
<div class="hl" style="left:488px;top:438px;width:840px"></div>
<span class="re" style="left:378px;top:445.5px;font-weight:bold"><span style="letter-spacing: -0.328px;">T</span><span style="letter-spacing: 0.328px;">H</span>E<span style="letter-spacing: 0.328px;">N</span></span>
<svg class="a" style="left:1341px;top:447px" width="12" height="12" viewBox="0 0 12 12"><path d="M4.5 0.5H7.5V4.5H11.5V7.5H7.5V11.5H4.5V7.5H0.5V4.5H4.5Z" fill="url(#gpl)" stroke="#3f8a55" stroke-width="1"></path></svg>
<span class="re" style="left:457px;top:467.4px"><span style="letter-spacing: 0.328px;">1</span><span style="letter-spacing: -0.328px;">.</span></span>
<div class="hl" style="left:488px;top:465px;width:840px"></div>
<span class="re" style="left:488px;top:467px"><span style="letter-spacing: 0.328px;">R</span><span style="letter-spacing: 0.328px;">e</span><span style="letter-spacing: -0.328px;">t</span>r<span style="letter-spacing: 0.328px;">a</span>c<span style="letter-spacing: -0.328px;">t</span><span style="letter-spacing: -0.328px;"> </span><b><span style="letter-spacing: -0.328px;">L</span><span style="letter-spacing: -0.328px;">o</span><span style="letter-spacing: 0.328px;">a</span><span style="letter-spacing: -0.328px;">n</span><span style="letter-spacing: 0.328px;">A</span><span style="letter-spacing: -0.328px;">p</span><span style="letter-spacing: -0.328px;">p</span><span style="letter-spacing: -0.328px;">l</span><span style="letter-spacing: -0.328px;">i</span><span style="letter-spacing: 0.328px;">c</span><span style="letter-spacing: 0.328px;">a</span>t<span style="letter-spacing: -0.328px;">i</span><span style="letter-spacing: -0.328px;">o</span><span style="letter-spacing: -0.328px;">n</span><span style="letter-spacing: -0.328px;"> </span>[<span style="letter-spacing: 0.328px;">a</span>]</b></span>
<div class="hl" style="left:488px;top:480px;width:840px"></div>
<div class="mi" style="left:1330px;top:470px"></div><svg class="a" style="left:1340px;top:467px" width="15" height="16" viewBox="0 0 15 16"><path d="M6.5 0.5H9.5V4.5H13.5V7.5H9.5V11.5H6.5V7.5H2.5V4.5H6.5Z" fill="url(#gpl)" stroke="#3f8a55" stroke-width="1"></path><path d="M2.5 6.5H6.5V10.5H8.8L4.5 15.2L0.2 10.5H2.5Z" fill="url(#gbl)" stroke="#2a58c0" stroke-width="0.7"></path></svg><svg class="a" style="left:1357px;top:468px" width="12" height="14" viewBox="0 0 12 14"><path d="M3.5 0.5H8.5V7.5H11.5L6 13.5L0.5 7.5H3.5Z" fill="url(#gyl)" stroke="#c88a14" stroke-width="1" stroke-linejoin="round"></path></svg><svg class="a" style="left:1373px;top:468px" width="12" height="14" viewBox="0 0 12 14"><path d="M3.5 13.5H8.5V6.5H11.5L6 0.5L0.5 6.5H3.5Z" fill="url(#gyl)" stroke="#c88a14" stroke-width="1" stroke-linejoin="round"></path></svg>
<div class="hl" style="left:488px;top:485px;width:840px"></div>
<span class="re" style="left:488px;top:494.6px">S<span style="letter-spacing: 0.328px;">e</span><span style="letter-spacing: -0.328px;">t</span><span style="letter-spacing: -0.328px;"> </span>v<span style="letter-spacing: 0.328px;">a</span><span style="letter-spacing: 0.328px;">l</span><span style="letter-spacing: 0.328px;">u</span><span style="letter-spacing: 0.328px;">e</span><span style="letter-spacing: -0.328px;"> </span><span style="letter-spacing: 0.328px;">o</span><span style="letter-spacing: -0.328px;">f</span><span style="letter-spacing: -0.328px;"> </span><span style="letter-spacing: 0.328px;">L</span><span style="letter-spacing: 0.328px;">o</span><span style="letter-spacing: 0.328px;">a</span><span style="letter-spacing: 0.328px;">n</span>A<span style="letter-spacing: 0.328px;">p</span><span style="letter-spacing: 0.328px;">p</span><span style="letter-spacing: 0.328px;">l</span><span style="letter-spacing: 0.328px;">i</span>c<span style="letter-spacing: 0.328px;">a</span><span style="letter-spacing: -0.328px;">t</span><span style="letter-spacing: 0.328px;">i</span><span style="letter-spacing: 0.328px;">o</span><span style="letter-spacing: 0.328px;">n</span><span style="letter-spacing: -0.328px;"> </span><b>[<span style="letter-spacing: 0.328px;">a</span>]</b></span>
<span class="re" style="left:793px;top:494.5px"><span style="letter-spacing: 0.328px;">a</span><span style="letter-spacing: 0.328px;">p</span><span style="letter-spacing: 0.328px;">p</span>r<span style="letter-spacing: 0.328px;">o</span>v<span style="letter-spacing: 0.328px;">e</span><span style="letter-spacing: 0.328px;">d</span></span>
<div class="sel" style="left:905px;top:486px;width:219px;height:29px"></div>
<div class="selb" style="left:1111px;top:487px;height:28px"></div>
<span class="t" style="left:910px;top:489.6px;font-size:14px;color:#555"><span style="letter-spacing: 0.109px;">f</span><span style="letter-spacing: 0.219px;">a</span><span style="letter-spacing: -0.109px;">l</span>s<span style="letter-spacing: 0.219px;">e</span></span>
<div class="mi" style="left:1127px;top:498px"></div><div class="mi" style="left:1311px;top:498px"></div>
<span class="re" style="left:457px;top:513.4px"><span style="letter-spacing: 0.328px;">2</span><span style="letter-spacing: -0.328px;">.</span></span>
<div class="mi" style="left:1330px;top:516px"></div><svg class="a" style="left:1340px;top:513px" width="15" height="16" viewBox="0 0 15 16"><path d="M6.5 0.5H9.5V4.5H13.5V7.5H9.5V11.5H6.5V7.5H2.5V4.5H6.5Z" fill="url(#gpl)" stroke="#3f8a55" stroke-width="1"></path><path d="M2.5 6.5H6.5V10.5H8.8L4.5 15.2L0.2 10.5H2.5Z" fill="url(#gbl)" stroke="#2a58c0" stroke-width="0.7"></path></svg><svg class="a" style="left:1357px;top:514px" width="12" height="14" viewBox="0 0 12 14"><path d="M3.5 0.5H8.5V7.5H11.5L6 13.5L0.5 7.5H3.5Z" fill="url(#gyl)" stroke="#c88a14" stroke-width="1" stroke-linejoin="round"></path></svg><svg class="a" style="left:1373px;top:514px" width="12" height="14" viewBox="0 0 12 14"><path d="M3.5 13.5H8.5V6.5H11.5L6 0.5L0.5 6.5H3.5Z" fill="url(#gyl)" stroke="#c88a14" stroke-width="1" stroke-linejoin="round"></path></svg>
<span class="re" style="left:488px;top:527.6px">S<span style="letter-spacing: 0.328px;">e</span><span style="letter-spacing: -0.328px;">t</span><span style="letter-spacing: -0.328px;"> </span>v<span style="letter-spacing: 0.328px;">a</span><span style="letter-spacing: 0.328px;">l</span><span style="letter-spacing: 0.328px;">u</span><span style="letter-spacing: 0.328px;">e</span><span style="letter-spacing: -0.328px;"> </span><span style="letter-spacing: 0.328px;">o</span><span style="letter-spacing: -0.328px;">f</span><span style="letter-spacing: -0.328px;"> </span><span style="letter-spacing: 0.328px;">L</span><span style="letter-spacing: 0.328px;">o</span><span style="letter-spacing: 0.328px;">a</span><span style="letter-spacing: 0.328px;">n</span>A<span style="letter-spacing: 0.328px;">p</span><span style="letter-spacing: 0.328px;">p</span><span style="letter-spacing: 0.328px;">l</span><span style="letter-spacing: 0.328px;">i</span>c<span style="letter-spacing: 0.328px;">a</span><span style="letter-spacing: -0.328px;">t</span><span style="letter-spacing: 0.328px;">i</span><span style="letter-spacing: 0.328px;">o</span><span style="letter-spacing: 0.328px;">n</span><span style="letter-spacing: -0.328px;"> </span><b>[<span style="letter-spacing: 0.328px;">a</span>]</b></span>
<span class="re" style="left:793px;top:528.2px"><span style="letter-spacing: 0.328px;">e</span>x<span style="letter-spacing: 0.328px;">p</span><span style="letter-spacing: 0.328px;">l</span><span style="letter-spacing: 0.328px;">a</span><span style="letter-spacing: 0.328px;">n</span><span style="letter-spacing: 0.328px;">a</span><span style="letter-spacing: -0.328px;">t</span><span style="letter-spacing: 0.328px;">i</span><span style="letter-spacing: 0.328px;">o</span><span style="letter-spacing: 0.328px;">n</span></span>
<div class="inp" style="left:905px;top:517px;width:212px;height:25px"></div>
<span class="t" style="left:909px;top:521.6px;font-size:14px;color:#555"><span style="letter-spacing: 0.219px;">h</span><span style="letter-spacing: 0.219px;">a</span>s<span style="letter-spacing: 0.109px;"> </span><span style="letter-spacing: 0.219px;">b</span><span style="letter-spacing: 0.219px;">e</span><span style="letter-spacing: 0.219px;">e</span><span style="letter-spacing: 0.219px;">n</span><span style="letter-spacing: 0.109px;"> </span><span style="letter-spacing: 0.219px;">b</span><span style="letter-spacing: 0.219px;">a</span><span style="letter-spacing: 0.219px;">n</span>k<span style="letter-spacing: 0.344px;">r</span><span style="letter-spacing: 0.219px;">u</span><span style="letter-spacing: 0.219px;">p</span><span style="letter-spacing: 0.109px;">t</span></span>
<div class="mi" style="left:1119px;top:531px"></div><div class="mi" style="left:1311px;top:531px"></div>
<div class="hl" style="left:488px;top:552px;width:840px"></div>
<span class="re" style="left:435px;top:555.2px">(s<span style="letter-spacing: 0.328px;">h</span><span style="letter-spacing: 0.328px;">o</span><span style="letter-spacing: 0.328px;">w</span></span>
<span class="re" style="left:435px;top:569.5px"><span style="letter-spacing: 0.328px;">o</span><span style="letter-spacing: 0.328px;">p</span><span style="letter-spacing: -0.328px;">t</span><span style="letter-spacing: 0.328px;">i</span><span style="letter-spacing: 0.328px;">o</span><span style="letter-spacing: 0.328px;">n</span>s<span style="letter-spacing: -0.328px;">.</span><span style="letter-spacing: -0.328px;">.</span><span style="letter-spacing: -0.328px;">.</span>)</span>
<!-- tabs -->
<div class="a" style="left:378px;top:609px;width:1009px;height:1px;background:#ddd"></div>
<div class="a" style="left:378px;top:609px;width:50px;height:38px;background:#fff;border:1px solid #ddd;border-top:none;border-radius:0 0 4px 4px"></div>
<span class="t" style="left:391px;top:621px;font-size:14px;color:#555"><span style="letter-spacing: -0.344px;">E</span><span style="letter-spacing: 0.219px;">d</span><span style="letter-spacing: -0.109px;">i</span><span style="letter-spacing: 0.109px;">t</span></span>
<span class="t lnk" style="left:443px;top:621px;font-size:14px"><span style="letter-spacing: -0.344px;">S</span><span style="letter-spacing: 0.219px;">o</span><span style="letter-spacing: 0.219px;">u</span><span style="letter-spacing: 0.344px;">r</span>c<span style="letter-spacing: 0.219px;">e</span></span>
<span class="t lnk" style="left:516px;top:621px;font-size:14px"><span style="letter-spacing: -0.109px;">C</span><span style="letter-spacing: 0.219px;">o</span><span style="letter-spacing: 0.219px;">n</span><span style="letter-spacing: 0.109px;">f</span><span style="letter-spacing: -0.109px;">i</span><span style="letter-spacing: 0.219px;">g</span></span>
<span class="t lnk" style="left:585px;top:621px;font-size:14px"><span style="letter-spacing: 0.344px;">M</span><span style="letter-spacing: 0.219px;">e</span><span style="letter-spacing: 0.109px;">t</span><span style="letter-spacing: 0.219px;">a</span><span style="letter-spacing: 0.219px;">d</span><span style="letter-spacing: 0.219px;">a</span><span style="letter-spacing: 0.109px;">t</span><span style="letter-spacing: 0.219px;">a</span></span>
<!-- problems -->
<div class="a" style="left:378px;top:667px;width:1009px;height:8px;background:#e6e6e6"></div>
<div class="a" style="left:878px;top:669px;width:7px;height:1px;background:#666"></div>
<div class="a" style="left:878px;top:671px;width:7px;height:1px;background:#666"></div>
<span class="t" style="left:385px;top:681.5px;font-size:18px;color:#333">Pr<span style="letter-spacing: -0.016px;">o</span><span style="letter-spacing: -0.016px;">b</span>l<span style="letter-spacing: -0.016px;">e</span>ms</span>
<div class="btn" style="left:1334px;top:680px;width:23px;height:24px"></div>
<svg class="a" style="left:1341px;top:688px" width="9" height="9" viewBox="0 0 9 9"><path d="M1.2 1.2L7.8 7.8M7.8 1.2L1.2 7.8" stroke="#222" stroke-width="2.2"></path></svg>
<div class="btn" style="left:1362px;top:680px;width:22px;height:24px"></div>
<i class="a" style="left:1369px;top:688px;border-left:4px solid transparent;border-right:4px solid transparent;border-top:4px solid #000"></i>
<div class="a" style="left:378px;top:712px;width:1009px;height:1px;background:#c0c0c0"></div>
<span class="t" style="left:393px;top:720px;font-size:13px;font-weight:bold;color:#333"><span style="letter-spacing: 0.063px;">L</span><span style="letter-spacing: -0.234px;">e</span><span style="letter-spacing: -0.234px;">v</span><span style="letter-spacing: -0.234px;">e</span><span style="letter-spacing: 0.391px;">l</span></span>
<span class="t" style="left:595.5px;top:720px;font-size:13px;font-weight:bold;color:#333"><span style="letter-spacing: -0.938px;">T</span><span style="letter-spacing: -0.234px;">e</span><span style="letter-spacing: -0.234px;">x</span><span style="letter-spacing: -0.328px;">t</span></span>
<span class="t" style="left:797.5px;top:720px;font-size:13px;font-weight:bold;color:#333"><span style="letter-spacing: 0.063px;">F</span><span style="letter-spacing: 0.391px;">i</span><span style="letter-spacing: 0.391px;">l</span><span style="letter-spacing: -0.234px;">e</span></span>
<span class="t" style="left:998px;top:720px;font-size:13px;font-weight:bold;color:#333"><span style="letter-spacing: -0.391px;">C</span><span style="letter-spacing: 0.063px;">o</span><span style="letter-spacing: 0.391px;">l</span><span style="letter-spacing: 0.063px;">u</span><span style="letter-spacing: 0.438px;">m</span><span style="letter-spacing: 0.063px;">n</span></span>
<span class="t" style="left:1199.5px;top:720px;font-size:13px;font-weight:bold;color:#333"><span style="letter-spacing: 0.063px;">L</span><span style="letter-spacing: 0.391px;">i</span><span style="letter-spacing: 0.063px;">n</span><span style="letter-spacing: -0.234px;">e</span></span>
<div class="a" style="left:378px;top:740px;width:1009px;height:2px;background:#666"></div>
<span class="t" style="left:877px;top:747px;font-size:12px;color:#333">---</span>
<svg class="a" style="left:370px;top:498px" width="16" height="22" viewBox="0 0 16 22"><path d="M1.5 1.5V17L5 13.5L8 20L10.5 19L7.8 12.5H12.5Z" fill="#fff" stroke="#000" stroke-width="1.6" stroke-linejoin="round"></path></svg>
<div class="a" style="left:362px;top:527px;width:3px;height:1px;background:#999"></div>
<div class="a" style="left:362px;top:530px;width:3px;height:1px;background:#999"></div>
<div class="a" style="left:362px;top:533px;width:3px;height:1px;background:#999"></div>

</body></html>
